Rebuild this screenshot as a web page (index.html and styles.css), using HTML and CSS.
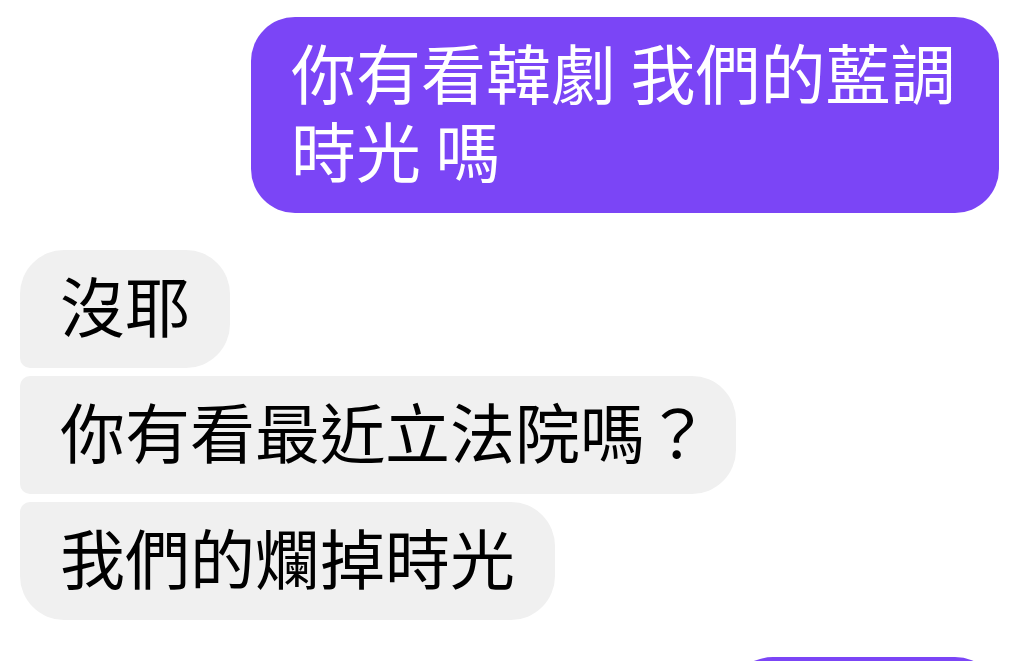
FILE: index.html
```html
<!DOCTYPE html>
<html lang="zh-Hant">
<head>
  <meta charset="UTF-8" />
  <meta name="viewport" content="width=device-width, initial-scale=1.0"/>
  <title>Chat</title>
  <link rel="stylesheet" href="styles.css">
</head>
<body>
  <div class="chat">
    <div class="row mine">
      <div class="bubble sent">你有看韓劇 我們的藍調時光 嗎</div>
    </div>

    <div class="group">
      <div class="row">
        <div class="bubble recv first">沒耶</div>
      </div>
      <div class="row">
        <div class="bubble recv middle">你有看最近立法院嗎<span class="q">？</span></div>
      </div>
      <div class="row">
        <div class="bubble recv last">我們的爛掉時光</div>
      </div>
    </div>

    <!-- next message, only its top edge shows -->
    <div class="row mine">
      <div class="bubble sent peek"></div>
    </div>
  </div>
</body>
</html>
```

FILE: styles.css
```css
body {
  margin: 0;
  background: #ffffff;
  font-family: 'Noto Sans CJK TC', 'Noto Sans', sans-serif;
  overflow: hidden;
}

.chat {
  display: flex;
  flex-direction: column;
  gap: 37px;
  padding: 17px 25px 0 20px;
}

.group {
  display: flex;
  flex-direction: column;
  gap: 8px;
}

.row {
  display: flex;
}

.row.mine {
  justify-content: flex-end;
}

.bubble {
  font-size: 65px;
  line-height: 78px;
  padding: 15px 40px 25px;
  border-radius: 44px;
}

.sent {
  background: #7b45f6;
  color: #ffffff;
  max-width: 668px;
}

.sent.peek {
  width: 190px;
  height: 78px;
}

.recv {
  background: #f0f0f0;
  color: #000000;
  white-space: nowrap;
}

.recv.first { border-bottom-left-radius: 10px; }
.recv.middle { border-top-left-radius: 10px; border-bottom-left-radius: 10px; }
.recv.last { border-top-left-radius: 10px; }

.q {
  letter-spacing: -14px;
}
```
